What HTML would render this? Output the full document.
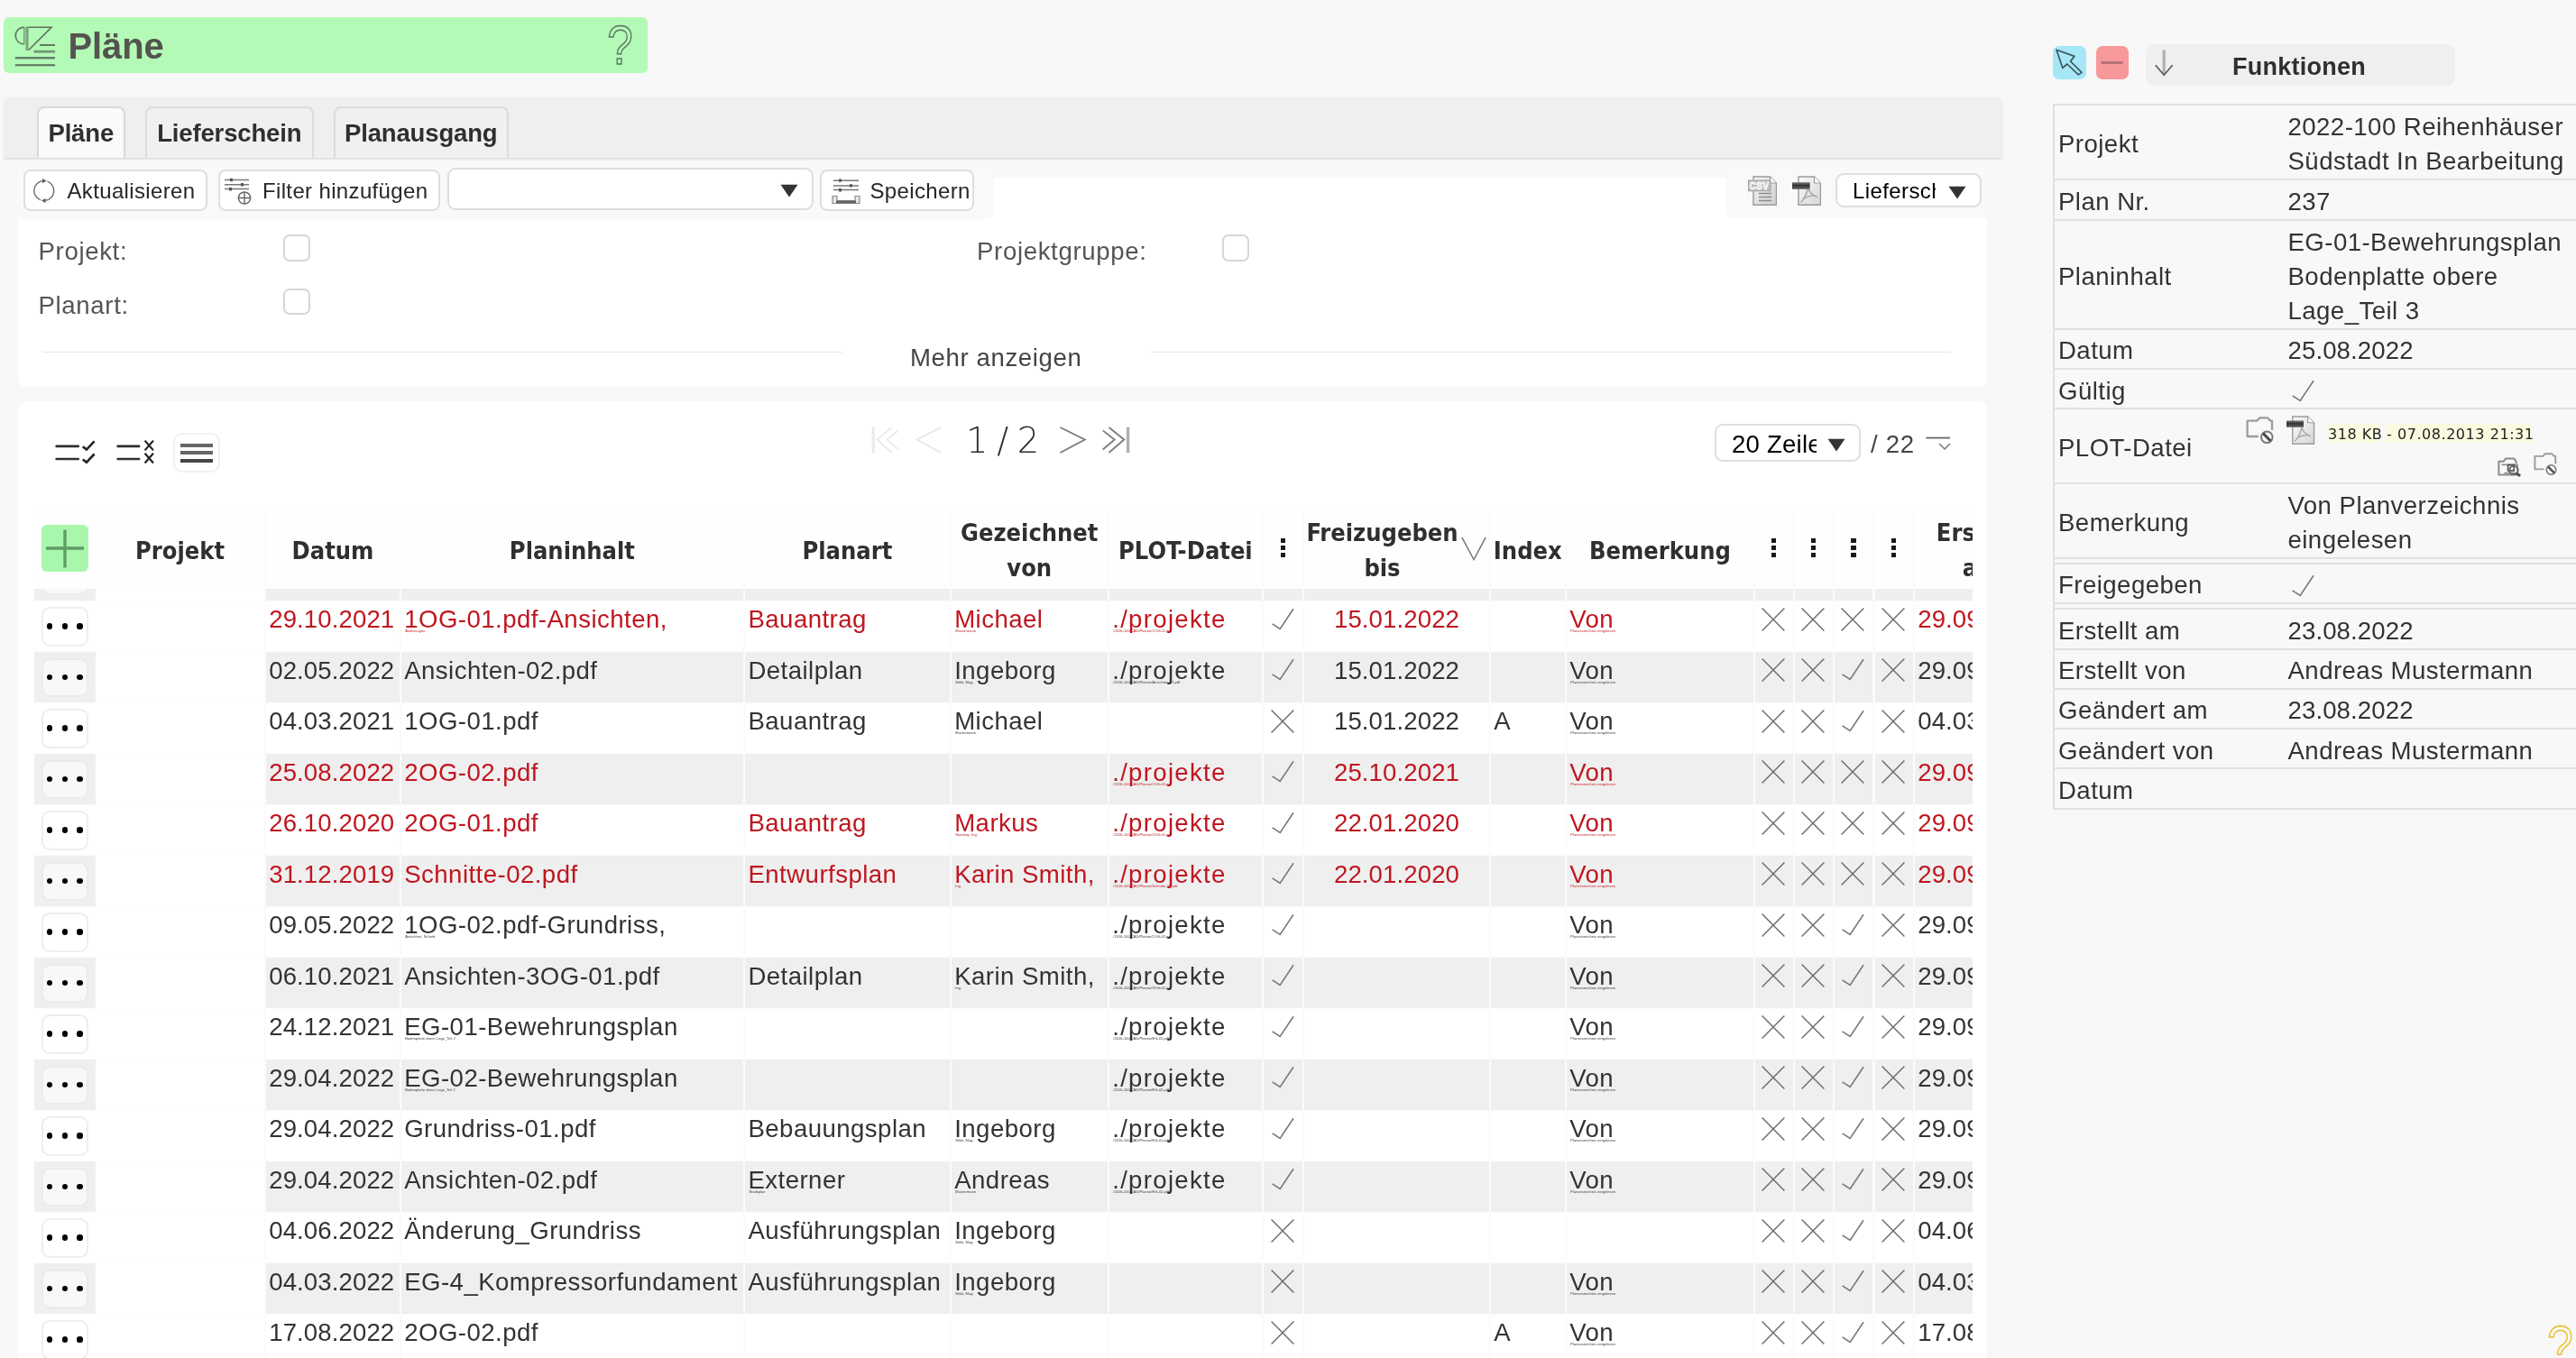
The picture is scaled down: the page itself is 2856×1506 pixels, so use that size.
<!DOCTYPE html>
<html lang="de"><head><meta charset="utf-8"><title>Pläne</title>
<style>
*{box-sizing:border-box;margin:0;padding:0}
html,body{width:2856px;height:1506px;overflow:hidden;background:#f8f8f8}
body{position:relative;font-family:"Liberation Sans",sans-serif;font-size:27.6px;color:#333;letter-spacing:.45px}
.abs{position:absolute}
#wrap{position:absolute;left:0;top:0;width:2856px;height:1506px;overflow:hidden;will-change:transform}
.d{letter-spacing:.1px}
/* title */
#title{left:4px;top:19px;width:714px;height:62px;background:#b3fab6;border-radius:6px}
#title .tt{position:absolute;left:71.5px;top:12.2px;font-size:40px;line-height:40px;font-weight:bold;color:#54534f;letter-spacing:-.1px;white-space:nowrap}
/* tab bar */
#tabs{left:4px;top:108px;width:2216px;height:67px;background:#efefef;border-radius:7px 7px 4px 4px;box-shadow:0 1.5px 2px rgba(0,0,0,.10)}
.tab{position:absolute;top:10px;height:57px;border:2px solid #dcdcdc;border-bottom:0;border-radius:8px 8px 0 0;background:#f0f0f0;font-weight:bold;font-size:27.5px;line-height:34px;padding-top:11px;text-align:center;color:#2f2f2d;letter-spacing:-.15px;white-space:nowrap}
.tab.act{background:#fafafa;border-color:#d9d9d9}
/* filter area */
#fwhite{left:20px;top:197px;width:2183px;height:232px;background:#fff;border-radius:0 0 9px 9px}
#tbl{left:20px;top:175px;width:1082px;height:68px;background:#f9f9f9;border-radius:0 0 9px 0}
#tbr{left:1913px;top:175px;width:290px;height:67px;background:#f9f9f9;border-radius:0 0 0 9px}
.btn{position:absolute;height:45.5px;top:188px;background:#fff;border:2px solid #dedede;border-radius:8px;font-size:24px;line-height:30px;color:#262626;letter-spacing:.35px;white-space:nowrap}
.btn span{position:absolute;top:7.2px}
.sel{position:absolute;background:#fff;border:2px solid #dedede;border-radius:9px;overflow:hidden;white-space:nowrap;color:#000}
.lbl{position:absolute;color:#555;white-space:nowrap;line-height:30px;letter-spacing:.65px}
.cb{position:absolute;width:29.5px;height:29.5px;border:2px solid #d6d6d6;border-radius:7px;background:#fff}
.hr{position:absolute;height:1.5px;background:#e6e6e6;top:389.8px}
/* grid card */
#card{left:20px;top:445px;width:2183px;height:1100px;background:#fff;border-radius:9px 9px 0 0}
#grid{left:38px;top:566px;width:2149px;height:960px;overflow:hidden;background:#fbfbfb}
#ghead{position:absolute;left:0;top:0;width:100%;height:86.6px}
.h{position:absolute;top:0;height:86.6px;background:#fefefe;display:flex;align-items:center;justify-content:center;text-align:center;font-family:"DejaVu Sans Condensed","Liberation Sans",sans-serif;font-weight:bold;font-size:27px;line-height:38.75px;letter-spacing:0;color:#2f2f2d;white-space:nowrap;overflow:hidden}
.h span{display:block;margin-top:3.5px}
.plus{width:52px;height:52.5px;background:#a9f7ac;border-radius:6px;margin:-2.5px 0 0 -1px}
.plus svg{display:block}
.vd{width:6px;margin-top:-1px}
.vd i{display:block;width:5.4px;height:5.4px;background:#1a1a1a;margin:0 0 2.5px 0}
.sortv{position:absolute;left:174px;top:29px}
#gbody{position:absolute;left:0;top:86px;width:100%;height:900px;overflow:hidden}
.r{position:absolute;left:0;width:2300px;height:56.5px}
.c{position:absolute;top:0;height:55.5px;overflow:hidden;white-space:nowrap;background:#fff}
.g .c{background:#efefef}
.r .c.pj{background:#fff}
.red{color:#bf161f}
.t{position:absolute;left:3.2px;top:5.4px;line-height:30px}
.pp{letter-spacing:1.3px}
.ctr .t{left:0;right:0;text-align:center}
.s{position:absolute;left:4.3px;top:30.3px;font-size:3.9px;line-height:5px;letter-spacing:.1px}
.ic{position:absolute;left:7px;top:7.2px}
.f7 .ic{left:7.4px}
.dots{position:absolute;left:8px;top:6.6px;width:51.5px;height:43.4px;border:2px solid #eee;border-radius:9px;background:#fff}
.g .dots{background:#f8f8f8;border-color:#ebebeb}
.dots i{position:absolute;top:16px;width:6.2px;height:6.2px;border-radius:50%;background:#000}
.dots i:nth-child(1){left:3.8px}.dots i:nth-child(2){left:20.6px}.dots i:nth-child(3){left:37.4px}
/* detail */
#det{left:2275.8px;top:114.9px;width:600px;height:783px;border-left:2px solid #dfdfdf;border-top:2px solid #e1e1e1}
.dr{position:absolute;left:-2px;width:600px;border-bottom:2px solid #e1e1e1;display:flex;align-items:center}
.dl{position:absolute;left:6.2px;white-space:nowrap;line-height:37.8px;letter-spacing:.45px;margin-top:4.7px}
.dv{position:absolute;left:260.7px;white-space:nowrap;line-height:37.8px;margin-top:4.7px}
.fs{position:absolute;height:21px;background:#fafae0;padding-top:.6px;font-family:"DejaVu Sans",sans-serif;font-size:16px;line-height:21px;letter-spacing:.55px;color:#222;white-space:nowrap;padding-left:1px}
</style></head><body>
<div id="wrap">

<div id="title" class="abs">
<svg class="abs" style="left:12px;top:10px" width="46" height="46" viewBox="0 0 46 46"><path d="M10.6 1.2A9.4 9.4 0 0 0 10.6 20" fill="none" stroke="#5f7a62" stroke-width="1.7"/><path d="M10.8 1V20.2" stroke="#6b8a6e" stroke-width="1.3"/><path d="M14 0.5V27" stroke="#79a57d" stroke-width="3.2"/><path d="M15.5 1.2H41L15.8 26.5" fill="none" stroke="#5c715e" stroke-width="1.6"/><path d="M28 21H45" stroke="#5f7a62" stroke-width="2"/><path d="M21.5 28.2H45" stroke="#6f9673" stroke-width="2.8"/><path d="M0.8 35.3H45" stroke="#64826a" stroke-width="2.6"/><path d="M0.8 43.3H45" stroke="#5a6e5c" stroke-width="2"/></svg>
<div class="tt">Pläne</div>
<div class="abs" style="left:669px;top:5.5px"><svg width="30" height="52" viewBox="0 0 30 52" style="overflow:visible"><text x="14.75" y="46.3" text-anchor="middle" font-family="Liberation Sans,sans-serif" font-size="61.2" fill="none" stroke="#5d6f5e" stroke-width="1.5" textLength="28.8" lengthAdjust="spacingAndGlyphs">?</text></svg></div>
</div>


<div id="fwhite" class="abs"></div>
<div id="tbl" class="abs"></div>
<div id="tbr" class="abs"></div>
<div id="tabs" class="abs">
<div class="tab act" style="left:37px;width:97.5px">Pläne</div>
<div class="tab" style="left:157px;width:186.5px">Lieferschein</div>
<div class="tab" style="left:366px;width:193.5px">Planausgang</div>
</div>

<div class="btn" style="left:26px;width:203.5px"><svg class="abs" style="left:8px;top:7px" width="28" height="30" viewBox="0 0 28 30"><path d="M9.04 24.84A11 11 0 0 1 11.84 3.54M16.56 4.16A11 11 0 0 1 13.76 25.46" fill="none" stroke="#6d6d6d" stroke-width="1.4"/><path d="M11 .9 15.8 3.5 11.1 6.3Z" fill="#666"/><path d="M14.6 22.7 9.8 25.5 14.5 28.2Z" fill="#666"/></svg><span style="left:46.5px">Aktualisieren</span></div>
<div class="btn" style="left:242px;width:246px"><svg class="abs" style="left:4px;top:6px" width="32" height="32" viewBox="0 0 32 32"><path d="M1 3.6H28M1 8.8H28M1 13.6H28" stroke="#777" stroke-width="1.5"/><path d="M7 1.8h3v3.4H7zM19 7h3v3.4h-3zM6 12h3v3.4H6z" fill="#555"/><circle cx="23" cy="23.5" r="6.6" fill="#fff" stroke="#666" stroke-width="1.5"/><path d="M16.4 23.5H29.6M23 16.9V30.1" stroke="#666" stroke-width="1.4"/></svg><span style="left:47px">Filter hinzufügen</span></div>
<div class="sel" style="left:496px;top:186px;width:405.5px;height:46.5px"><svg class="abs" style="left:367px;top:16px" width="20" height="15" viewBox="0 0 20 15"><path d="M.5 .8H19.5L10 14.4Z" fill="#333"/></svg></div>
<div class="btn" style="left:909px;width:171px"><svg class="abs" style="left:11px;top:7px" width="32" height="30" viewBox="0 0 32 30"><path d="M2 3.2H30M2 9H30M2 13.6H30" stroke="#777" stroke-width="1.5"/><path d="M8 1.4h3v3.4H8zM20 7.2h3v3.4h-3zM8 12h3v3.4H8z" fill="#555"/><path d="M1 20.5H6V25.5H26V20.5H31V28.5H1Z" fill="#e8e8e8" stroke="#8a8a8a" stroke-width="1.2"/><path d="M5 27H27" stroke="#666" stroke-width="3"/></svg><span style="left:53.5px">Speichern</span></div>

<div class="abs" style="left:1938px;top:195px"><svg width="32" height="33" viewBox="0 0 32 33"><defs><linearGradient id="cp" x1="0" y1="0" x2="1" y2="1"><stop offset="0" stop-color="#f6f6f6"/><stop offset="1" stop-color="#cfcfcf"/></linearGradient></defs><path d="M6 1H24.5L31.5 8V32.2H6Z" fill="url(#cp)" stroke="#9a9a9a" stroke-width="1.4"/><path d="M24.5 1V8H31.5" fill="#fff" stroke="#9a9a9a" stroke-width="1.2"/><path d="M12 19.5H26M12 23.5H26M12 27.5H26" stroke="#8a8a8a" stroke-width="1.4"/><rect x="0.5" y="5" width="24.5" height="11.8" fill="#bcbcbc" stroke="#a4a4a4" stroke-width="1"/><text x="12.5" y="14.6" font-family="Liberation Sans,sans-serif" font-weight="bold" font-size="10" text-anchor="middle" fill="none" stroke="#fff" stroke-width=".9">CSV</text></svg></div>
<div class="abs" style="left:1987px;top:195px"><svg width="32" height="33" viewBox="0 0 32 33"><defs><linearGradient id="pg32" x1="0" y1="0" x2="0" y2="1"><stop offset="0" stop-color="#7a7a7a"/><stop offset=".45" stop-color="#333"/><stop offset="1" stop-color="#666"/></linearGradient><linearGradient id="pp32" x1="0" y1="0" x2="1" y2="1"><stop offset="0" stop-color="#fafafa"/><stop offset="1" stop-color="#d6d6d6"/></linearGradient></defs><path d="M7 1H24.5L31.5 8V32.2H7Z" fill="url(#pp32)" stroke="#9a9a9a" stroke-width="1.4"/><path d="M24.5 1V8H31.5" fill="#fff" stroke="#9a9a9a" stroke-width="1.2"/><path d="M9.5 29.5C13 26 16 20 17.5 13.5C18.5 17 21 21 28 23.5M12 25.5C17 22.5 22 21.5 26.5 22.5" fill="none" stroke="#a8a8a8" stroke-width="1.5"/><rect x="0" y="7.2" width="19.6" height="7.6" fill="url(#pg32)"/></svg></div>
<div class="sel" style="left:2035px;top:192px;width:162px;height:37.5px;font-size:24px;line-height:30px;letter-spacing:.4px"><span class="abs" style="left:17px;top:3.4px;width:92px;overflow:hidden">Lieferschein</span><svg class="abs" style="left:123px;top:12px" width="20" height="15" viewBox="0 0 20 15"><path d="M.5 .8H19.5L10 14.4Z" fill="#333"/></svg></div>

<div class="lbl" style="left:42.5px;top:263.5px">Projekt:</div>
<div class="cb" style="left:314px;top:260.2px"></div>
<div class="lbl" style="left:42.5px;top:323.5px">Planart:</div>
<div class="cb" style="left:314px;top:319.6px"></div>
<div class="lbl" style="left:1083px;top:263.5px">Projektgruppe:</div>
<div class="cb" style="left:1355.3px;top:260.2px"></div>
<div class="hr" style="left:47px;width:887px"></div>
<div class="hr" style="left:1276px;width:886.5px"></div>
<div class="lbl" style="left:1009px;top:381.5px;color:#444;letter-spacing:.6px">Mehr anzeigen</div>

<div id="card" class="abs"></div>
<svg class="abs" style="left:60px;top:486px" width="48" height="30" viewBox="0 0 48 30"><path d="M2.6 8.9H26.8M2.6 23H26.8" stroke="#2f2f2f" stroke-width="2.6" stroke-linecap="round"/><path d="M31.8 9.3 35.9 12.6 44.6 3.4M31.8 23.4 35.9 26.7 44.6 17.5" fill="none" stroke="#222" stroke-width="2.6"/></svg>
<svg class="abs" style="left:128px;top:486px" width="46" height="30" viewBox="0 0 46 30"><path d="M2.6 8.9H26.2M2.6 23H26.2" stroke="#2f2f2f" stroke-width="2.6" stroke-linecap="round"/><path d="M32.6 2.6 42 13.4M42 2.6 32.6 13.4M32.6 16.7 42 27.5M42 16.7 32.6 27.5" fill="none" stroke="#222" stroke-width="2.2"/></svg>
<div class="abs" style="left:192.3px;top:480.1px;width:51.5px;height:43.8px;border:2px solid #f0f0f0;border-radius:10px;background:#fff"><i class="abs" style="left:5.8px;top:9.9px;width:36px;height:3.9px;background:#666"></i><i class="abs" style="left:5.8px;top:17.9px;width:36px;height:3.9px;background:#666"></i><i class="abs" style="left:5.8px;top:26.9px;width:36px;height:3.9px;background:#444"></i></div>

<svg class="abs" style="left:965px;top:472px" width="36" height="32" viewBox="0 0 36 32"><path d="M3.2 1.6V30.2" stroke="#ececec" stroke-width="3.4"/><path d="M23.5 2 7.6 15.5 23.5 30M31 5.4 18.6 15.5 31 26.5" fill="none" stroke="#e6e6e6" stroke-width="1.6"/></svg>
<svg class="abs" style="left:1014px;top:472px" width="32" height="32" viewBox="0 0 32 32"><path d="M29.2 2 2.6 15.5 29.2 30" fill="none" stroke="#e6e6e6" stroke-width="1.7"/></svg>
<div class="abs" style="left:1071px;top:466.3px;font-family:'DejaVu Sans','Liberation Sans',sans-serif;font-weight:200;font-size:38.5px;line-height:46px;letter-spacing:-.3px;color:#2d2d2b;white-space:nowrap;word-spacing:-2px">1 / 2</div>
<svg class="abs" style="left:1173px;top:472px" width="32" height="32" viewBox="0 0 32 32"><path d="M2.5 2 29.8 15.5 2.5 30" fill="none" stroke="#7a7a7a" stroke-width="1.8"/></svg>
<svg class="abs" style="left:1220px;top:472px" width="36" height="32" viewBox="0 0 36 32"><path d="M30.6 1.6V30.2" stroke="#b0b0b0" stroke-width="3.4"/><path d="M2.7 5.4 15.7 15.5 2.7 26.5M9.5 2 26.3 15.5 9.5 30" fill="none" stroke="#7a7a7a" stroke-width="1.8"/></svg>

<div class="sel" style="left:1901px;top:470px;width:161.5px;height:41.5px;line-height:32px;border-radius:9px"><span class="abs d" style="left:17px;top:5px;width:93.5px;overflow:hidden;letter-spacing:.2px">20 Zeilen</span><svg class="abs" style="left:123px;top:13.5px" width="20" height="15" viewBox="0 0 20 15"><path d="M.5 .8H19.5L10 14.4Z" fill="#333"/></svg></div>
<div class="abs d" style="left:2074px;top:478px;line-height:30px;color:#444;white-space:nowrap;letter-spacing:.7px">/ 22</div>
<svg class="abs" style="left:2135px;top:483px" width="28" height="18" viewBox="0 0 28 18"><path d="M.5 2.6H27" stroke="#666" stroke-width="1.8"/><path d="M15 9 21 15 27 9" fill="none" stroke="#777" stroke-width="1.5"/></svg>

<div id="grid" class="abs">
<div id="gbody">
<div class="r g" style="top:-41.75px"><div class="c " style="left:0px;width:68px"><div class="dots"><i></i><i></i><i></i></div></div><div class="c pj" style="left:68px;width:187px"></div><div class="c " style="left:257px;width:148px"></div><div class="c " style="left:407px;width:378.75px"></div><div class="c " style="left:788.25px;width:226.25px"></div><div class="c " style="left:1017px;width:172.5px"></div><div class="c " style="left:1192px;width:168.75px"></div><div class="c " style="left:1363.25px;width:42.5px"></div><div class="c " style="left:1408.25px;width:204.5px"></div><div class="c " style="left:1615px;width:81.5px"></div><div class="c " style="left:1699px;width:206.75px"></div><div class="c " style="left:1908.25px;width:41.25px"></div><div class="c " style="left:1952px;width:41.75px"></div><div class="c " style="left:1996.25px;width:42px"></div><div class="c " style="left:2040.75px;width:42px"></div><div class="c " style="left:2085px;width:147px"></div></div>
<div class="r w red" style="top:14.75px"><div class="c " style="left:0px;width:68px"><div class="dots"><i></i><i></i><i></i></div></div><div class="c pj" style="left:68px;width:187px"></div><div class="c " style="left:257px;width:148px"><span class="t d">29.10.2021</span></div><div class="c " style="left:407px;width:378.75px"><span class="t">1OG-01.pdf-Ansichten,</span><span class="s">Änderungen</span></div><div class="c " style="left:788.25px;width:226.25px"><span class="t">Bauantrag</span></div><div class="c " style="left:1017px;width:172.5px"><span class="t">Michael</span><span class="s">Mustermann</span></div><div class="c " style="left:1192px;width:168.75px"><span class="t pp">./projekte</span><span class="s">/2016-100/CAD/Plaene/1OG-01.pdf</span></div><div class="c f7" style="left:1363.25px;width:42.5px"><svg class="ic" width="26" height="26" viewBox="0 0 26 26"><path d="M1.6 17.8 10.2 23.4 25 1.2" fill="none" stroke="#777" stroke-width="1.55"/></svg></div><div class="c ctr" style="left:1408.25px;width:204.5px"><span class="t d">15.01.2022</span></div><div class="c " style="left:1615px;width:81.5px"></div><div class="c " style="left:1699px;width:206.75px"><span class="t">Von</span><span class="s">Planverzeichnis eingelesen</span></div><div class="c f" style="left:1908.25px;width:41.25px"><svg class="ic" width="26" height="26" viewBox="0 0 26 26"><path d="M.6 .6 25.4 25.4M25.4 .6 .6 25.4" fill="none" stroke="#6c6c6c" stroke-width="1.45"/></svg></div><div class="c f" style="left:1952px;width:41.75px"><svg class="ic" width="26" height="26" viewBox="0 0 26 26"><path d="M.6 .6 25.4 25.4M25.4 .6 .6 25.4" fill="none" stroke="#6c6c6c" stroke-width="1.45"/></svg></div><div class="c f" style="left:1996.25px;width:42px"><svg class="ic" width="26" height="26" viewBox="0 0 26 26"><path d="M.6 .6 25.4 25.4M25.4 .6 .6 25.4" fill="none" stroke="#6c6c6c" stroke-width="1.45"/></svg></div><div class="c f" style="left:2040.75px;width:42px"><svg class="ic" width="26" height="26" viewBox="0 0 26 26"><path d="M.6 .6 25.4 25.4M25.4 .6 .6 25.4" fill="none" stroke="#6c6c6c" stroke-width="1.45"/></svg></div><div class="c " style="left:2085px;width:147px"><span class="t d">29.09.2022</span></div></div>
<div class="r g" style="top:71.25px"><div class="c " style="left:0px;width:68px"><div class="dots"><i></i><i></i><i></i></div></div><div class="c pj" style="left:68px;width:187px"></div><div class="c " style="left:257px;width:148px"><span class="t d">02.05.2022</span></div><div class="c " style="left:407px;width:378.75px"><span class="t">Ansichten-02.pdf</span></div><div class="c " style="left:788.25px;width:226.25px"><span class="t">Detailplan</span></div><div class="c " style="left:1017px;width:172.5px"><span class="t">Ingeborg</span><span class="s">Stikk, Mag.</span></div><div class="c " style="left:1192px;width:168.75px"><span class="t pp">./projekte</span><span class="s">/2016-100/CAD/Plaene/Ansichten-02.pdf</span></div><div class="c f7" style="left:1363.25px;width:42.5px"><svg class="ic" width="26" height="26" viewBox="0 0 26 26"><path d="M1.6 17.8 10.2 23.4 25 1.2" fill="none" stroke="#777" stroke-width="1.55"/></svg></div><div class="c ctr" style="left:1408.25px;width:204.5px"><span class="t d">15.01.2022</span></div><div class="c " style="left:1615px;width:81.5px"></div><div class="c " style="left:1699px;width:206.75px"><span class="t">Von</span><span class="s">Planverzeichnis eingelesen</span></div><div class="c f" style="left:1908.25px;width:41.25px"><svg class="ic" width="26" height="26" viewBox="0 0 26 26"><path d="M.6 .6 25.4 25.4M25.4 .6 .6 25.4" fill="none" stroke="#6c6c6c" stroke-width="1.45"/></svg></div><div class="c f" style="left:1952px;width:41.75px"><svg class="ic" width="26" height="26" viewBox="0 0 26 26"><path d="M.6 .6 25.4 25.4M25.4 .6 .6 25.4" fill="none" stroke="#6c6c6c" stroke-width="1.45"/></svg></div><div class="c f" style="left:1996.25px;width:42px"><svg class="ic" width="26" height="26" viewBox="0 0 26 26"><path d="M1.6 17.8 10.2 23.4 25 1.2" fill="none" stroke="#777" stroke-width="1.55"/></svg></div><div class="c f" style="left:2040.75px;width:42px"><svg class="ic" width="26" height="26" viewBox="0 0 26 26"><path d="M.6 .6 25.4 25.4M25.4 .6 .6 25.4" fill="none" stroke="#6c6c6c" stroke-width="1.45"/></svg></div><div class="c " style="left:2085px;width:147px"><span class="t d">29.09.2022</span></div></div>
<div class="r w" style="top:127.75px"><div class="c " style="left:0px;width:68px"><div class="dots"><i></i><i></i><i></i></div></div><div class="c pj" style="left:68px;width:187px"></div><div class="c " style="left:257px;width:148px"><span class="t d">04.03.2021</span></div><div class="c " style="left:407px;width:378.75px"><span class="t">1OG-01.pdf</span></div><div class="c " style="left:788.25px;width:226.25px"><span class="t">Bauantrag</span></div><div class="c " style="left:1017px;width:172.5px"><span class="t">Michael</span><span class="s">Mustermann</span></div><div class="c " style="left:1192px;width:168.75px"></div><div class="c f7" style="left:1363.25px;width:42.5px"><svg class="ic" width="26" height="26" viewBox="0 0 26 26"><path d="M.6 .6 25.4 25.4M25.4 .6 .6 25.4" fill="none" stroke="#6c6c6c" stroke-width="1.45"/></svg></div><div class="c ctr" style="left:1408.25px;width:204.5px"><span class="t d">15.01.2022</span></div><div class="c " style="left:1615px;width:81.5px"><span class="t">A</span></div><div class="c " style="left:1699px;width:206.75px"><span class="t">Von</span><span class="s">Planverzeichnis eingelesen</span></div><div class="c f" style="left:1908.25px;width:41.25px"><svg class="ic" width="26" height="26" viewBox="0 0 26 26"><path d="M.6 .6 25.4 25.4M25.4 .6 .6 25.4" fill="none" stroke="#6c6c6c" stroke-width="1.45"/></svg></div><div class="c f" style="left:1952px;width:41.75px"><svg class="ic" width="26" height="26" viewBox="0 0 26 26"><path d="M.6 .6 25.4 25.4M25.4 .6 .6 25.4" fill="none" stroke="#6c6c6c" stroke-width="1.45"/></svg></div><div class="c f" style="left:1996.25px;width:42px"><svg class="ic" width="26" height="26" viewBox="0 0 26 26"><path d="M1.6 17.8 10.2 23.4 25 1.2" fill="none" stroke="#777" stroke-width="1.55"/></svg></div><div class="c f" style="left:2040.75px;width:42px"><svg class="ic" width="26" height="26" viewBox="0 0 26 26"><path d="M.6 .6 25.4 25.4M25.4 .6 .6 25.4" fill="none" stroke="#6c6c6c" stroke-width="1.45"/></svg></div><div class="c " style="left:2085px;width:147px"><span class="t d">04.03.2021</span></div></div>
<div class="r g red" style="top:184.25px"><div class="c " style="left:0px;width:68px"><div class="dots"><i></i><i></i><i></i></div></div><div class="c pj" style="left:68px;width:187px"></div><div class="c " style="left:257px;width:148px"><span class="t d">25.08.2022</span></div><div class="c " style="left:407px;width:378.75px"><span class="t">2OG-02.pdf</span></div><div class="c " style="left:788.25px;width:226.25px"></div><div class="c " style="left:1017px;width:172.5px"></div><div class="c " style="left:1192px;width:168.75px"><span class="t pp">./projekte</span><span class="s">/2016-100/CAD/Plaene/2OG-02.pdf</span></div><div class="c f7" style="left:1363.25px;width:42.5px"><svg class="ic" width="26" height="26" viewBox="0 0 26 26"><path d="M1.6 17.8 10.2 23.4 25 1.2" fill="none" stroke="#777" stroke-width="1.55"/></svg></div><div class="c ctr" style="left:1408.25px;width:204.5px"><span class="t d">25.10.2021</span></div><div class="c " style="left:1615px;width:81.5px"></div><div class="c " style="left:1699px;width:206.75px"><span class="t">Von</span><span class="s">Planverzeichnis eingelesen</span></div><div class="c f" style="left:1908.25px;width:41.25px"><svg class="ic" width="26" height="26" viewBox="0 0 26 26"><path d="M.6 .6 25.4 25.4M25.4 .6 .6 25.4" fill="none" stroke="#6c6c6c" stroke-width="1.45"/></svg></div><div class="c f" style="left:1952px;width:41.75px"><svg class="ic" width="26" height="26" viewBox="0 0 26 26"><path d="M.6 .6 25.4 25.4M25.4 .6 .6 25.4" fill="none" stroke="#6c6c6c" stroke-width="1.45"/></svg></div><div class="c f" style="left:1996.25px;width:42px"><svg class="ic" width="26" height="26" viewBox="0 0 26 26"><path d="M.6 .6 25.4 25.4M25.4 .6 .6 25.4" fill="none" stroke="#6c6c6c" stroke-width="1.45"/></svg></div><div class="c f" style="left:2040.75px;width:42px"><svg class="ic" width="26" height="26" viewBox="0 0 26 26"><path d="M.6 .6 25.4 25.4M25.4 .6 .6 25.4" fill="none" stroke="#6c6c6c" stroke-width="1.45"/></svg></div><div class="c " style="left:2085px;width:147px"><span class="t d">29.09.2022</span></div></div>
<div class="r w red" style="top:240.75px"><div class="c " style="left:0px;width:68px"><div class="dots"><i></i><i></i><i></i></div></div><div class="c pj" style="left:68px;width:187px"></div><div class="c " style="left:257px;width:148px"><span class="t d">26.10.2020</span></div><div class="c " style="left:407px;width:378.75px"><span class="t">2OG-01.pdf</span></div><div class="c " style="left:788.25px;width:226.25px"><span class="t">Bauantrag</span></div><div class="c " style="left:1017px;width:172.5px"><span class="t">Markus</span><span class="s">Stanring, Ing.</span></div><div class="c " style="left:1192px;width:168.75px"><span class="t pp">./projekte</span><span class="s">/2016-100/CAD/Plaene/2OG-01.pdf</span></div><div class="c f7" style="left:1363.25px;width:42.5px"><svg class="ic" width="26" height="26" viewBox="0 0 26 26"><path d="M1.6 17.8 10.2 23.4 25 1.2" fill="none" stroke="#777" stroke-width="1.55"/></svg></div><div class="c ctr" style="left:1408.25px;width:204.5px"><span class="t d">22.01.2020</span></div><div class="c " style="left:1615px;width:81.5px"></div><div class="c " style="left:1699px;width:206.75px"><span class="t">Von</span><span class="s">Planverzeichnis eingelesen</span></div><div class="c f" style="left:1908.25px;width:41.25px"><svg class="ic" width="26" height="26" viewBox="0 0 26 26"><path d="M.6 .6 25.4 25.4M25.4 .6 .6 25.4" fill="none" stroke="#6c6c6c" stroke-width="1.45"/></svg></div><div class="c f" style="left:1952px;width:41.75px"><svg class="ic" width="26" height="26" viewBox="0 0 26 26"><path d="M.6 .6 25.4 25.4M25.4 .6 .6 25.4" fill="none" stroke="#6c6c6c" stroke-width="1.45"/></svg></div><div class="c f" style="left:1996.25px;width:42px"><svg class="ic" width="26" height="26" viewBox="0 0 26 26"><path d="M.6 .6 25.4 25.4M25.4 .6 .6 25.4" fill="none" stroke="#6c6c6c" stroke-width="1.45"/></svg></div><div class="c f" style="left:2040.75px;width:42px"><svg class="ic" width="26" height="26" viewBox="0 0 26 26"><path d="M.6 .6 25.4 25.4M25.4 .6 .6 25.4" fill="none" stroke="#6c6c6c" stroke-width="1.45"/></svg></div><div class="c " style="left:2085px;width:147px"><span class="t d">29.09.2022</span></div></div>
<div class="r g red" style="top:297.25px"><div class="c " style="left:0px;width:68px"><div class="dots"><i></i><i></i><i></i></div></div><div class="c pj" style="left:68px;width:187px"></div><div class="c " style="left:257px;width:148px"><span class="t d">31.12.2019</span></div><div class="c " style="left:407px;width:378.75px"><span class="t">Schnitte-02.pdf</span></div><div class="c " style="left:788.25px;width:226.25px"><span class="t">Entwurfsplan</span></div><div class="c " style="left:1017px;width:172.5px"><span class="t">Karin Smith,</span><span class="s">Ing.</span></div><div class="c " style="left:1192px;width:168.75px"><span class="t pp">./projekte</span><span class="s">/2016-100/CAD/Plaene/Schnitte-02.pdf</span></div><div class="c f7" style="left:1363.25px;width:42.5px"><svg class="ic" width="26" height="26" viewBox="0 0 26 26"><path d="M1.6 17.8 10.2 23.4 25 1.2" fill="none" stroke="#777" stroke-width="1.55"/></svg></div><div class="c ctr" style="left:1408.25px;width:204.5px"><span class="t d">22.01.2020</span></div><div class="c " style="left:1615px;width:81.5px"></div><div class="c " style="left:1699px;width:206.75px"><span class="t">Von</span><span class="s">Planverzeichnis eingelesen</span></div><div class="c f" style="left:1908.25px;width:41.25px"><svg class="ic" width="26" height="26" viewBox="0 0 26 26"><path d="M.6 .6 25.4 25.4M25.4 .6 .6 25.4" fill="none" stroke="#6c6c6c" stroke-width="1.45"/></svg></div><div class="c f" style="left:1952px;width:41.75px"><svg class="ic" width="26" height="26" viewBox="0 0 26 26"><path d="M.6 .6 25.4 25.4M25.4 .6 .6 25.4" fill="none" stroke="#6c6c6c" stroke-width="1.45"/></svg></div><div class="c f" style="left:1996.25px;width:42px"><svg class="ic" width="26" height="26" viewBox="0 0 26 26"><path d="M.6 .6 25.4 25.4M25.4 .6 .6 25.4" fill="none" stroke="#6c6c6c" stroke-width="1.45"/></svg></div><div class="c f" style="left:2040.75px;width:42px"><svg class="ic" width="26" height="26" viewBox="0 0 26 26"><path d="M.6 .6 25.4 25.4M25.4 .6 .6 25.4" fill="none" stroke="#6c6c6c" stroke-width="1.45"/></svg></div><div class="c " style="left:2085px;width:147px"><span class="t d">29.09.2022</span></div></div>
<div class="r w" style="top:353.75px"><div class="c " style="left:0px;width:68px"><div class="dots"><i></i><i></i><i></i></div></div><div class="c pj" style="left:68px;width:187px"></div><div class="c " style="left:257px;width:148px"><span class="t d">09.05.2022</span></div><div class="c " style="left:407px;width:378.75px"><span class="t">1OG-02.pdf-Grundriss,</span><span class="s">Ansichten, Schnitt</span></div><div class="c " style="left:788.25px;width:226.25px"></div><div class="c " style="left:1017px;width:172.5px"></div><div class="c " style="left:1192px;width:168.75px"><span class="t pp">./projekte</span><span class="s">/2016-100/CAD/Plaene/1OG-02.pdf</span></div><div class="c f7" style="left:1363.25px;width:42.5px"><svg class="ic" width="26" height="26" viewBox="0 0 26 26"><path d="M1.6 17.8 10.2 23.4 25 1.2" fill="none" stroke="#777" stroke-width="1.55"/></svg></div><div class="c ctr" style="left:1408.25px;width:204.5px"></div><div class="c " style="left:1615px;width:81.5px"></div><div class="c " style="left:1699px;width:206.75px"><span class="t">Von</span><span class="s">Planverzeichnis eingelesen</span></div><div class="c f" style="left:1908.25px;width:41.25px"><svg class="ic" width="26" height="26" viewBox="0 0 26 26"><path d="M.6 .6 25.4 25.4M25.4 .6 .6 25.4" fill="none" stroke="#6c6c6c" stroke-width="1.45"/></svg></div><div class="c f" style="left:1952px;width:41.75px"><svg class="ic" width="26" height="26" viewBox="0 0 26 26"><path d="M.6 .6 25.4 25.4M25.4 .6 .6 25.4" fill="none" stroke="#6c6c6c" stroke-width="1.45"/></svg></div><div class="c f" style="left:1996.25px;width:42px"><svg class="ic" width="26" height="26" viewBox="0 0 26 26"><path d="M1.6 17.8 10.2 23.4 25 1.2" fill="none" stroke="#777" stroke-width="1.55"/></svg></div><div class="c f" style="left:2040.75px;width:42px"><svg class="ic" width="26" height="26" viewBox="0 0 26 26"><path d="M.6 .6 25.4 25.4M25.4 .6 .6 25.4" fill="none" stroke="#6c6c6c" stroke-width="1.45"/></svg></div><div class="c " style="left:2085px;width:147px"><span class="t d">29.09.2022</span></div></div>
<div class="r g" style="top:410.25px"><div class="c " style="left:0px;width:68px"><div class="dots"><i></i><i></i><i></i></div></div><div class="c pj" style="left:68px;width:187px"></div><div class="c " style="left:257px;width:148px"><span class="t d">06.10.2021</span></div><div class="c " style="left:407px;width:378.75px"><span class="t">Ansichten-3OG-01.pdf</span></div><div class="c " style="left:788.25px;width:226.25px"><span class="t">Detailplan</span></div><div class="c " style="left:1017px;width:172.5px"><span class="t">Karin Smith,</span><span class="s">Ing.</span></div><div class="c " style="left:1192px;width:168.75px"><span class="t pp">./projekte</span><span class="s">/2016-100/CAD/Plaene/3OG-01.pdf</span></div><div class="c f7" style="left:1363.25px;width:42.5px"><svg class="ic" width="26" height="26" viewBox="0 0 26 26"><path d="M1.6 17.8 10.2 23.4 25 1.2" fill="none" stroke="#777" stroke-width="1.55"/></svg></div><div class="c ctr" style="left:1408.25px;width:204.5px"></div><div class="c " style="left:1615px;width:81.5px"></div><div class="c " style="left:1699px;width:206.75px"><span class="t">Von</span><span class="s">Planverzeichnis eingelesen</span></div><div class="c f" style="left:1908.25px;width:41.25px"><svg class="ic" width="26" height="26" viewBox="0 0 26 26"><path d="M.6 .6 25.4 25.4M25.4 .6 .6 25.4" fill="none" stroke="#6c6c6c" stroke-width="1.45"/></svg></div><div class="c f" style="left:1952px;width:41.75px"><svg class="ic" width="26" height="26" viewBox="0 0 26 26"><path d="M.6 .6 25.4 25.4M25.4 .6 .6 25.4" fill="none" stroke="#6c6c6c" stroke-width="1.45"/></svg></div><div class="c f" style="left:1996.25px;width:42px"><svg class="ic" width="26" height="26" viewBox="0 0 26 26"><path d="M1.6 17.8 10.2 23.4 25 1.2" fill="none" stroke="#777" stroke-width="1.55"/></svg></div><div class="c f" style="left:2040.75px;width:42px"><svg class="ic" width="26" height="26" viewBox="0 0 26 26"><path d="M.6 .6 25.4 25.4M25.4 .6 .6 25.4" fill="none" stroke="#6c6c6c" stroke-width="1.45"/></svg></div><div class="c " style="left:2085px;width:147px"><span class="t d">29.09.2022</span></div></div>
<div class="r w" style="top:466.75px"><div class="c " style="left:0px;width:68px"><div class="dots"><i></i><i></i><i></i></div></div><div class="c pj" style="left:68px;width:187px"></div><div class="c " style="left:257px;width:148px"><span class="t d">24.12.2021</span></div><div class="c " style="left:407px;width:378.75px"><span class="t">EG-01-Bewehrungsplan</span><span class="s">Bodenplatte obere Lage_Teil 2</span></div><div class="c " style="left:788.25px;width:226.25px"></div><div class="c " style="left:1017px;width:172.5px"></div><div class="c " style="left:1192px;width:168.75px"><span class="t pp">./projekte</span><span class="s">/2016-100/CAD/Plaene/EG-01.pdf</span></div><div class="c f7" style="left:1363.25px;width:42.5px"><svg class="ic" width="26" height="26" viewBox="0 0 26 26"><path d="M1.6 17.8 10.2 23.4 25 1.2" fill="none" stroke="#777" stroke-width="1.55"/></svg></div><div class="c ctr" style="left:1408.25px;width:204.5px"></div><div class="c " style="left:1615px;width:81.5px"></div><div class="c " style="left:1699px;width:206.75px"><span class="t">Von</span><span class="s">Planverzeichnis eingelesen</span></div><div class="c f" style="left:1908.25px;width:41.25px"><svg class="ic" width="26" height="26" viewBox="0 0 26 26"><path d="M.6 .6 25.4 25.4M25.4 .6 .6 25.4" fill="none" stroke="#6c6c6c" stroke-width="1.45"/></svg></div><div class="c f" style="left:1952px;width:41.75px"><svg class="ic" width="26" height="26" viewBox="0 0 26 26"><path d="M.6 .6 25.4 25.4M25.4 .6 .6 25.4" fill="none" stroke="#6c6c6c" stroke-width="1.45"/></svg></div><div class="c f" style="left:1996.25px;width:42px"><svg class="ic" width="26" height="26" viewBox="0 0 26 26"><path d="M1.6 17.8 10.2 23.4 25 1.2" fill="none" stroke="#777" stroke-width="1.55"/></svg></div><div class="c f" style="left:2040.75px;width:42px"><svg class="ic" width="26" height="26" viewBox="0 0 26 26"><path d="M.6 .6 25.4 25.4M25.4 .6 .6 25.4" fill="none" stroke="#6c6c6c" stroke-width="1.45"/></svg></div><div class="c " style="left:2085px;width:147px"><span class="t d">29.09.2022</span></div></div>
<div class="r g" style="top:523.25px"><div class="c " style="left:0px;width:68px"><div class="dots"><i></i><i></i><i></i></div></div><div class="c pj" style="left:68px;width:187px"></div><div class="c " style="left:257px;width:148px"><span class="t d">29.04.2022</span></div><div class="c " style="left:407px;width:378.75px"><span class="t">EG-02-Bewehrungsplan</span><span class="s">Bodenplatte obere Lage_Teil 1</span></div><div class="c " style="left:788.25px;width:226.25px"></div><div class="c " style="left:1017px;width:172.5px"></div><div class="c " style="left:1192px;width:168.75px"><span class="t pp">./projekte</span><span class="s">/2016-100/CAD/Plaene/EG-02.pdf</span></div><div class="c f7" style="left:1363.25px;width:42.5px"><svg class="ic" width="26" height="26" viewBox="0 0 26 26"><path d="M1.6 17.8 10.2 23.4 25 1.2" fill="none" stroke="#777" stroke-width="1.55"/></svg></div><div class="c ctr" style="left:1408.25px;width:204.5px"></div><div class="c " style="left:1615px;width:81.5px"></div><div class="c " style="left:1699px;width:206.75px"><span class="t">Von</span><span class="s">Planverzeichnis eingelesen</span></div><div class="c f" style="left:1908.25px;width:41.25px"><svg class="ic" width="26" height="26" viewBox="0 0 26 26"><path d="M.6 .6 25.4 25.4M25.4 .6 .6 25.4" fill="none" stroke="#6c6c6c" stroke-width="1.45"/></svg></div><div class="c f" style="left:1952px;width:41.75px"><svg class="ic" width="26" height="26" viewBox="0 0 26 26"><path d="M.6 .6 25.4 25.4M25.4 .6 .6 25.4" fill="none" stroke="#6c6c6c" stroke-width="1.45"/></svg></div><div class="c f" style="left:1996.25px;width:42px"><svg class="ic" width="26" height="26" viewBox="0 0 26 26"><path d="M1.6 17.8 10.2 23.4 25 1.2" fill="none" stroke="#777" stroke-width="1.55"/></svg></div><div class="c f" style="left:2040.75px;width:42px"><svg class="ic" width="26" height="26" viewBox="0 0 26 26"><path d="M.6 .6 25.4 25.4M25.4 .6 .6 25.4" fill="none" stroke="#6c6c6c" stroke-width="1.45"/></svg></div><div class="c " style="left:2085px;width:147px"><span class="t d">29.09.2022</span></div></div>
<div class="r w" style="top:579.75px"><div class="c " style="left:0px;width:68px"><div class="dots"><i></i><i></i><i></i></div></div><div class="c pj" style="left:68px;width:187px"></div><div class="c " style="left:257px;width:148px"><span class="t d">29.04.2022</span></div><div class="c " style="left:407px;width:378.75px"><span class="t">Grundriss-01.pdf</span></div><div class="c " style="left:788.25px;width:226.25px"><span class="t">Bebauungsplan</span></div><div class="c " style="left:1017px;width:172.5px"><span class="t">Ingeborg</span><span class="s">Stikk, Mag.</span></div><div class="c " style="left:1192px;width:168.75px"><span class="t pp">./projekte</span><span class="s">/2016-100/CAD/Plaene/EG-01.pdf</span></div><div class="c f7" style="left:1363.25px;width:42.5px"><svg class="ic" width="26" height="26" viewBox="0 0 26 26"><path d="M1.6 17.8 10.2 23.4 25 1.2" fill="none" stroke="#777" stroke-width="1.55"/></svg></div><div class="c ctr" style="left:1408.25px;width:204.5px"></div><div class="c " style="left:1615px;width:81.5px"></div><div class="c " style="left:1699px;width:206.75px"><span class="t">Von</span><span class="s">Planverzeichnis eingelesen</span></div><div class="c f" style="left:1908.25px;width:41.25px"><svg class="ic" width="26" height="26" viewBox="0 0 26 26"><path d="M.6 .6 25.4 25.4M25.4 .6 .6 25.4" fill="none" stroke="#6c6c6c" stroke-width="1.45"/></svg></div><div class="c f" style="left:1952px;width:41.75px"><svg class="ic" width="26" height="26" viewBox="0 0 26 26"><path d="M.6 .6 25.4 25.4M25.4 .6 .6 25.4" fill="none" stroke="#6c6c6c" stroke-width="1.45"/></svg></div><div class="c f" style="left:1996.25px;width:42px"><svg class="ic" width="26" height="26" viewBox="0 0 26 26"><path d="M1.6 17.8 10.2 23.4 25 1.2" fill="none" stroke="#777" stroke-width="1.55"/></svg></div><div class="c f" style="left:2040.75px;width:42px"><svg class="ic" width="26" height="26" viewBox="0 0 26 26"><path d="M.6 .6 25.4 25.4M25.4 .6 .6 25.4" fill="none" stroke="#6c6c6c" stroke-width="1.45"/></svg></div><div class="c " style="left:2085px;width:147px"><span class="t d">29.09.2022</span></div></div>
<div class="r g" style="top:636.25px"><div class="c " style="left:0px;width:68px"><div class="dots"><i></i><i></i><i></i></div></div><div class="c pj" style="left:68px;width:187px"></div><div class="c " style="left:257px;width:148px"><span class="t d">29.04.2022</span></div><div class="c " style="left:407px;width:378.75px"><span class="t">Ansichten-02.pdf</span></div><div class="c " style="left:788.25px;width:226.25px"><span class="t">Externer</span><span class="s">Statikplan</span></div><div class="c " style="left:1017px;width:172.5px"><span class="t">Andreas</span><span class="s">Mustermann</span></div><div class="c " style="left:1192px;width:168.75px"><span class="t pp">./projekte</span><span class="s">/2016-100/CAD/Plaene/EG-02.pdf</span></div><div class="c f7" style="left:1363.25px;width:42.5px"><svg class="ic" width="26" height="26" viewBox="0 0 26 26"><path d="M1.6 17.8 10.2 23.4 25 1.2" fill="none" stroke="#777" stroke-width="1.55"/></svg></div><div class="c ctr" style="left:1408.25px;width:204.5px"></div><div class="c " style="left:1615px;width:81.5px"></div><div class="c " style="left:1699px;width:206.75px"><span class="t">Von</span><span class="s">Planverzeichnis eingelesen</span></div><div class="c f" style="left:1908.25px;width:41.25px"><svg class="ic" width="26" height="26" viewBox="0 0 26 26"><path d="M.6 .6 25.4 25.4M25.4 .6 .6 25.4" fill="none" stroke="#6c6c6c" stroke-width="1.45"/></svg></div><div class="c f" style="left:1952px;width:41.75px"><svg class="ic" width="26" height="26" viewBox="0 0 26 26"><path d="M.6 .6 25.4 25.4M25.4 .6 .6 25.4" fill="none" stroke="#6c6c6c" stroke-width="1.45"/></svg></div><div class="c f" style="left:1996.25px;width:42px"><svg class="ic" width="26" height="26" viewBox="0 0 26 26"><path d="M1.6 17.8 10.2 23.4 25 1.2" fill="none" stroke="#777" stroke-width="1.55"/></svg></div><div class="c f" style="left:2040.75px;width:42px"><svg class="ic" width="26" height="26" viewBox="0 0 26 26"><path d="M.6 .6 25.4 25.4M25.4 .6 .6 25.4" fill="none" stroke="#6c6c6c" stroke-width="1.45"/></svg></div><div class="c " style="left:2085px;width:147px"><span class="t d">29.09.2022</span></div></div>
<div class="r w" style="top:692.75px"><div class="c " style="left:0px;width:68px"><div class="dots"><i></i><i></i><i></i></div></div><div class="c pj" style="left:68px;width:187px"></div><div class="c " style="left:257px;width:148px"><span class="t d">04.06.2022</span></div><div class="c " style="left:407px;width:378.75px"><span class="t">Änderung_Grundriss</span></div><div class="c " style="left:788.25px;width:226.25px"><span class="t">Ausführungsplan</span></div><div class="c " style="left:1017px;width:172.5px"><span class="t">Ingeborg</span><span class="s">Stikk, Mag.</span></div><div class="c " style="left:1192px;width:168.75px"></div><div class="c f7" style="left:1363.25px;width:42.5px"><svg class="ic" width="26" height="26" viewBox="0 0 26 26"><path d="M.6 .6 25.4 25.4M25.4 .6 .6 25.4" fill="none" stroke="#6c6c6c" stroke-width="1.45"/></svg></div><div class="c ctr" style="left:1408.25px;width:204.5px"></div><div class="c " style="left:1615px;width:81.5px"></div><div class="c " style="left:1699px;width:206.75px"></div><div class="c f" style="left:1908.25px;width:41.25px"><svg class="ic" width="26" height="26" viewBox="0 0 26 26"><path d="M.6 .6 25.4 25.4M25.4 .6 .6 25.4" fill="none" stroke="#6c6c6c" stroke-width="1.45"/></svg></div><div class="c f" style="left:1952px;width:41.75px"><svg class="ic" width="26" height="26" viewBox="0 0 26 26"><path d="M.6 .6 25.4 25.4M25.4 .6 .6 25.4" fill="none" stroke="#6c6c6c" stroke-width="1.45"/></svg></div><div class="c f" style="left:1996.25px;width:42px"><svg class="ic" width="26" height="26" viewBox="0 0 26 26"><path d="M1.6 17.8 10.2 23.4 25 1.2" fill="none" stroke="#777" stroke-width="1.55"/></svg></div><div class="c f" style="left:2040.75px;width:42px"><svg class="ic" width="26" height="26" viewBox="0 0 26 26"><path d="M.6 .6 25.4 25.4M25.4 .6 .6 25.4" fill="none" stroke="#6c6c6c" stroke-width="1.45"/></svg></div><div class="c " style="left:2085px;width:147px"><span class="t d">04.06.2022</span></div></div>
<div class="r g" style="top:749.25px"><div class="c " style="left:0px;width:68px"><div class="dots"><i></i><i></i><i></i></div></div><div class="c pj" style="left:68px;width:187px"></div><div class="c " style="left:257px;width:148px"><span class="t d">04.03.2022</span></div><div class="c " style="left:407px;width:378.75px"><span class="t">EG-4_Kompressorfundament</span></div><div class="c " style="left:788.25px;width:226.25px"><span class="t">Ausführungsplan</span></div><div class="c " style="left:1017px;width:172.5px"><span class="t">Ingeborg</span><span class="s">Stikk, Mag.</span></div><div class="c " style="left:1192px;width:168.75px"></div><div class="c f7" style="left:1363.25px;width:42.5px"><svg class="ic" width="26" height="26" viewBox="0 0 26 26"><path d="M.6 .6 25.4 25.4M25.4 .6 .6 25.4" fill="none" stroke="#6c6c6c" stroke-width="1.45"/></svg></div><div class="c ctr" style="left:1408.25px;width:204.5px"></div><div class="c " style="left:1615px;width:81.5px"></div><div class="c " style="left:1699px;width:206.75px"><span class="t">Von</span><span class="s">Planverzeichnis eingelesen</span></div><div class="c f" style="left:1908.25px;width:41.25px"><svg class="ic" width="26" height="26" viewBox="0 0 26 26"><path d="M.6 .6 25.4 25.4M25.4 .6 .6 25.4" fill="none" stroke="#6c6c6c" stroke-width="1.45"/></svg></div><div class="c f" style="left:1952px;width:41.75px"><svg class="ic" width="26" height="26" viewBox="0 0 26 26"><path d="M.6 .6 25.4 25.4M25.4 .6 .6 25.4" fill="none" stroke="#6c6c6c" stroke-width="1.45"/></svg></div><div class="c f" style="left:1996.25px;width:42px"><svg class="ic" width="26" height="26" viewBox="0 0 26 26"><path d="M1.6 17.8 10.2 23.4 25 1.2" fill="none" stroke="#777" stroke-width="1.55"/></svg></div><div class="c f" style="left:2040.75px;width:42px"><svg class="ic" width="26" height="26" viewBox="0 0 26 26"><path d="M.6 .6 25.4 25.4M25.4 .6 .6 25.4" fill="none" stroke="#6c6c6c" stroke-width="1.45"/></svg></div><div class="c " style="left:2085px;width:147px"><span class="t d">04.03.2022</span></div></div>
<div class="r w" style="top:805.75px"><div class="c " style="left:0px;width:68px"><div class="dots"><i></i><i></i><i></i></div></div><div class="c pj" style="left:68px;width:187px"></div><div class="c " style="left:257px;width:148px"><span class="t d">17.08.2022</span></div><div class="c " style="left:407px;width:378.75px"><span class="t">2OG-02.pdf</span></div><div class="c " style="left:788.25px;width:226.25px"></div><div class="c " style="left:1017px;width:172.5px"></div><div class="c " style="left:1192px;width:168.75px"></div><div class="c f7" style="left:1363.25px;width:42.5px"><svg class="ic" width="26" height="26" viewBox="0 0 26 26"><path d="M.6 .6 25.4 25.4M25.4 .6 .6 25.4" fill="none" stroke="#6c6c6c" stroke-width="1.45"/></svg></div><div class="c ctr" style="left:1408.25px;width:204.5px"></div><div class="c " style="left:1615px;width:81.5px"><span class="t">A</span></div><div class="c " style="left:1699px;width:206.75px"><span class="t">Von</span><span class="s">Planverzeichnis eingelesen</span></div><div class="c f" style="left:1908.25px;width:41.25px"><svg class="ic" width="26" height="26" viewBox="0 0 26 26"><path d="M.6 .6 25.4 25.4M25.4 .6 .6 25.4" fill="none" stroke="#6c6c6c" stroke-width="1.45"/></svg></div><div class="c f" style="left:1952px;width:41.75px"><svg class="ic" width="26" height="26" viewBox="0 0 26 26"><path d="M.6 .6 25.4 25.4M25.4 .6 .6 25.4" fill="none" stroke="#6c6c6c" stroke-width="1.45"/></svg></div><div class="c f" style="left:1996.25px;width:42px"><svg class="ic" width="26" height="26" viewBox="0 0 26 26"><path d="M1.6 17.8 10.2 23.4 25 1.2" fill="none" stroke="#777" stroke-width="1.55"/></svg></div><div class="c f" style="left:2040.75px;width:42px"><svg class="ic" width="26" height="26" viewBox="0 0 26 26"><path d="M.6 .6 25.4 25.4M25.4 .6 .6 25.4" fill="none" stroke="#6c6c6c" stroke-width="1.45"/></svg></div><div class="c " style="left:2085px;width:147px"><span class="t d">17.08.2022</span></div></div>
</div>
<div id="ghead"><div class="h " style="left:0px;width:68px"><div class="plus"><svg width="52" height="52" viewBox="0 0 52 52"><path d="M5 26H47M26 5.5V47.5" stroke="#5f9c66" stroke-width="3.4" fill="none"/></svg></div></div><div class="h " style="left:68px;width:187px"><span>Projekt</span></div><div class="h " style="left:257px;width:148px"><span>Datum</span></div><div class="h " style="left:407px;width:378.75px"><span>Planinhalt</span></div><div class="h " style="left:788.25px;width:226.25px"><span>Planart</span></div><div class="h " style="left:1017px;width:172.5px"><span>Gezeichnet<br>von</span></div><div class="h " style="left:1192px;width:168.75px"><span>PLOT-Datei</span></div><div class="h " style="left:1363.25px;width:42.5px"><div class="vd"><i></i><i></i><i></i></div></div><div class="h " style="left:1408.25px;width:204.5px"><span style="margin-right:32px">Freizugeben<br>bis</span><svg class="sortv" width="28" height="27" viewBox="0 0 28 27"><path d="M.8 .8 14 25.5 27.2 .8" fill="none" stroke="#777" stroke-width="1.5"/></svg></div><div class="h " style="left:1615px;width:81.5px"><span>Index</span></div><div class="h " style="left:1699px;width:206.75px"><span>Bemerkung</span></div><div class="h " style="left:1908.25px;width:41.25px"><div class="vd"><i></i><i></i><i></i></div></div><div class="h " style="left:1952px;width:41.75px"><div class="vd"><i></i><i></i><i></i></div></div><div class="h " style="left:1996.25px;width:42px"><div class="vd"><i></i><i></i><i></i></div></div><div class="h " style="left:2040.75px;width:42px"><div class="vd"><i></i><i></i><i></i></div></div><div class="h " style="left:2085px;width:147px"><span>Erstellt<br>am</span></div></div>
</div>

<!-- right panel -->
<div class="abs" style="left:2276.3px;top:51px;width:36.5px;height:36.7px;background:#a5e7f7;border-radius:7px"><svg class="abs" style="left:0;top:0" width="37" height="37" viewBox="0 0 37 37"><path d="M4 4.2 23.9 11.4 19.5 17 32 29.4 28.3 31.9 15.8 20 10.9 24.4Z" fill="none" stroke="#3f565e" stroke-width="1.7" stroke-linejoin="round"/></svg></div>
<div class="abs" style="left:2323.8px;top:51px;width:36.2px;height:36.7px;background:#f7999a;border-radius:7px"><i class="abs" style="left:5.5px;top:16.6px;width:25px;height:3.4px;background:#b87278;border-radius:1.5px"></i></div>
<div class="abs" style="left:2379px;top:49.2px;width:343px;height:46px;background:#efefef;border-radius:9px"><svg class="abs" style="left:8px;top:4px" width="26" height="34" viewBox="0 0 26 34"><path d="M12.2 2.4V29" stroke="#b2b2b2" stroke-width="3.4"/><path d="M2.8 19.2 12.2 30.2 21.6 19.2" fill="none" stroke="#5a5a5a" stroke-width="1.7"/></svg><div class="abs" style="left:96px;top:8.3px;font-weight:bold;font-size:27px;line-height:34px;letter-spacing:.25px;color:#2f2f2d;white-space:nowrap">Funktionen</div></div>

<div id="det" class="abs"><div class="dr" style="top:0px;height:83px"><div class="dl">Projekt</div><div class="dv">2022-100 Reihenhäuser<br>Südstadt In Bearbeitung</div></div><div class="dr" style="top:83px;height:45px"><div class="dl">Plan Nr.</div><div class="dv">237</div></div><div class="dr" style="top:128px;height:121px"><div class="dl">Planinhalt</div><div class="dv">EG-01-Bewehrungsplan<br>Bodenplatte obere<br>Lage_Teil 3</div></div><div class="dr" style="top:249px;height:44px"><div class="dl">Datum</div><div class="dv"><span class="d">25.08.2022</span></div></div><div class="dr" style="top:293px;height:44.5px"><div class="dl">Gültig</div><div class="dv"><div style="margin:1.6px 0 0 3.2px"><svg width="26" height="26" viewBox="0 0 26 26" style="display:block"><path d="M1.6 17.8 10.2 23.4 25 1.2" fill="none" stroke="#777" stroke-width="1.55"/></svg></div></div></div><div class="dr" style="top:337.5px;height:82.5px"><div class="dl">PLOT-Datei</div><div class="dv"></div><div style="position:absolute;left:214.4px;top:7.2px"><svg width="31" height="30" viewBox="0 0 31 30"><path d="M13.8 22H1.6V4.6H12.4L15.2 1.4H24.2L27 4.6H29V15" fill="none" stroke="#9c9c9c" stroke-width="2.3" stroke-linejoin="round"/><circle cx="23.3" cy="22.8" r="6.3" fill="#f4f4f4" stroke="#777" stroke-width="1.9"/><path d="M19.2 18.6 27.4 27" stroke="#4a4a4a" stroke-width="3"/></svg></div><div style="position:absolute;left:258.4px;top:6.8px"><svg width="33" height="32" viewBox="0 0 32 33"><defs><linearGradient id="pg33" x1="0" y1="0" x2="0" y2="1"><stop offset="0" stop-color="#7a7a7a"/><stop offset=".45" stop-color="#333"/><stop offset="1" stop-color="#666"/></linearGradient><linearGradient id="pp33" x1="0" y1="0" x2="1" y2="1"><stop offset="0" stop-color="#fafafa"/><stop offset="1" stop-color="#d6d6d6"/></linearGradient></defs><path d="M7 1H24.5L31.5 8V32.2H7Z" fill="url(#pp33)" stroke="#9a9a9a" stroke-width="1.4"/><path d="M24.5 1V8H31.5" fill="#fff" stroke="#9a9a9a" stroke-width="1.2"/><path d="M9.5 29.5C13 26 16 20 17.5 13.5C18.5 17 21 21 28 23.5M12 25.5C17 22.5 22 21.5 26.5 22.5" fill="none" stroke="#a8a8a8" stroke-width="1.5"/><rect x="0" y="5.6" width="19.6" height="7.6" fill="url(#pg33)"/></svg></div><span class="fs" style="left:304.2px;top:15.6px;width:58px">318 KB</span><span class="fs" style="left:369.2px;top:15.6px;width:162px">- 07.08.2013 21:31</span><div style="position:absolute;left:493.2px;top:49.4px"><svg width="27" height="24" viewBox="0 0 27 24"><path d="M25.5 21.6H1.4V6.8H6.4L9 3.6H18.4L20.6 6.8V9" fill="none" stroke="#8a8a8a" stroke-width="2" stroke-linejoin="round"/><path d="M4.6 10.4H22V19.6H7.4" fill="none" stroke="#8f8f8f" stroke-width="1.6"/><rect x="11.6" y="10.6" width="6.6" height="6.4" fill="none" stroke="#555" stroke-width="1.7"/><circle cx="18" cy="16.4" r="4.7" fill="none" stroke="#666" stroke-width="1.9"/><path d="M21 19.6 25 23" stroke="#444" stroke-width="2.4"/></svg></div><div style="position:absolute;left:533.7px;top:47.6px"><svg width="26" height="25" viewBox="0 0 31 30"><path d="M13.8 22H1.6V4.6H12.4L15.2 1.4H24.2L27 4.6H29V15" fill="none" stroke="#9c9c9c" stroke-width="2.3" stroke-linejoin="round"/><circle cx="23.3" cy="22.8" r="6.3" fill="#f4f4f4" stroke="#777" stroke-width="1.9"/><path d="M19.2 18.6 27.4 27" stroke="#4a4a4a" stroke-width="3"/></svg></div></div><div class="dr" style="top:420px;height:83px"><div class="dl">Bemerkung</div><div class="dv">Von Planverzeichnis<br>eingelesen</div></div><div class="dr" style="top:503px;height:6px"><div class="dl"></div><div class="dv"></div></div><div class="dr" style="top:509px;height:44px"><div class="dl">Freigegeben</div><div class="dv"><div style="margin:1.6px 0 0 3.2px"><svg width="26" height="26" viewBox="0 0 26 26" style="display:block"><path d="M1.6 17.8 10.2 23.4 25 1.2" fill="none" stroke="#777" stroke-width="1.55"/></svg></div></div></div><div class="dr" style="top:553px;height:6px"><div class="dl"></div><div class="dv"></div></div><div class="dr" style="top:559px;height:45px"><div class="dl">Erstellt am</div><div class="dv"><span class="d">23.08.2022</span></div></div><div class="dr" style="top:604px;height:44px"><div class="dl">Erstellt von</div><div class="dv">Andreas Mustermann</div></div><div class="dr" style="top:648px;height:44px"><div class="dl">Geändert am</div><div class="dv"><span class="d">23.08.2022</span></div></div><div class="dr" style="top:692px;height:44.5px"><div class="dl">Geändert von</div><div class="dv">Andreas Mustermann</div></div><div class="dr" style="top:736.5px;height:44.5px"><div class="dl">Datum</div><div class="dv"></div></div></div>

<div class="abs" style="left:2824.2px;top:1466.5px"><svg width="30" height="52" viewBox="0 0 30 52" style="overflow:visible"><text x="14.75" y="46.3" text-anchor="middle" font-family="Liberation Sans,sans-serif" font-size="61.2" fill="none" stroke="#e9c63c" stroke-width="1.8" textLength="28.8" lengthAdjust="spacingAndGlyphs">?</text></svg></div>
</div>
<script>(function(){var w=window.innerWidth;if(w&&Math.abs(w-2856)>2){document.documentElement.style.zoom=(w/2856);}})();</script>
</body></html>
